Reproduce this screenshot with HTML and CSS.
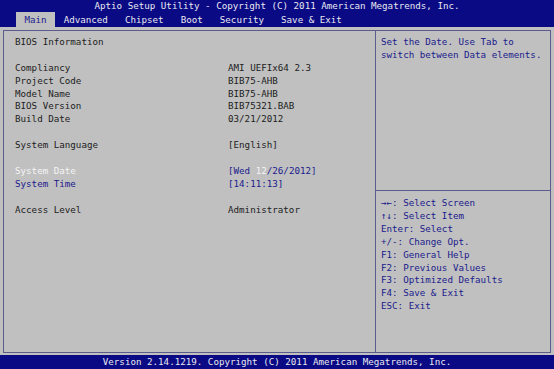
FILE: index.html
```html
<!DOCTYPE html>
<html lang="en">
<head>
    <meta charset="UTF-8">
    <title>Aptio Setup Utility</title>
    <link rel="stylesheet" href="styles.css">
</head>
<body>
    <div class="screen">
        <header class="top">
            <div class="title">Aptio Setup Utility - Copyright (C) 2011 American Megatrends, Inc.</div>
            <nav class="tabs">
                <span class="tab active">Main</span>
                <span class="tab">Advanced</span>
                <span class="tab">Chipset</span>
                <span class="tab">Boot</span>
                <span class="tab">Security</span>
                <span class="tab">Save &amp; Exit</span>
            </nav>
        </header>

        <div class="panel">
            <div class="settings">
                <div class="row"><span>BIOS Information</span></div>
                <div class="row"></div>
                <div class="row"><span>Compliancy</span><span>AMI UEFIx64 2.3</span></div>
                <div class="row"><span>Project Code</span><span>BIB75-AHB</span></div>
                <div class="row"><span>Model Name</span><span>BIB75-AHB</span></div>
                <div class="row"><span>BIOS Version</span><span>BIB75321.BAB</span></div>
                <div class="row"><span>Build Date</span><span>03/21/2012</span></div>
                <div class="row"></div>
                <div class="row"><span>System Language</span><span>[English]</span></div>
                <div class="row"></div>
                <div class="row option selected"><span class="label">System Date</span><span>[Wed <em>12</em>/26/2012]</span></div>
                <div class="row option"><span class="label">System Time</span><span>[14:11:13]</span></div>
                <div class="row"></div>
                <div class="row"><span>Access Level</span><span>Administrator</span></div>
            </div>

            <aside class="side">
                <div class="help">Set the Date. Use Tab to<br>switch between Data elements.</div>
                <div class="keys">
                    <div>&rarr;&larr;: Select Screen</div>
                    <div>&uarr;&darr;: Select Item</div>
                    <div>Enter: Select</div>
                    <div>+/-: Change Opt.</div>
                    <div>F1: General Help</div>
                    <div>F2: Previous Values</div>
                    <div>F3: Optimized Defaults</div>
                    <div>F4: Save &amp; Exit</div>
                    <div>ESC: Exit</div>
                </div>
            </aside>
        </div>

        <footer class="bottom">Version 2.14.1219. Copyright (C) 2011 American Megatrends, Inc.</footer>
    </div>
</body>
</html>
```

FILE: styles.css
```css
body {
    margin: 0;
    padding: 0;
    background-color: #c0c0c0;
    font-family: 'DejaVu Sans Mono', 'Liberation Mono', monospace;
    font-size: 9.2px;
    color: #1c1c1c;
}

.screen {
    width: 554px;
    height: 369px;
    display: flex;
    flex-direction: column;
    background-color: #c0c0c0;
}

.top {
    height: 27px;
    background-color: #0a0a84;
    color: #e8e8f0;
}

.title {
    height: 12px;
    line-height: 12px;
    text-align: center;
}

.tabs {
    display: flex;
    height: 15px;
    padding-left: 16px;
}

.tab {
    padding: 0 8.5px;
    line-height: 15px;
}

.tab.active {
    background-color: #c0c0c0;
    color: #1a1a8c;
}

.panel {
    display: flex;
    height: 323px;
    margin: 3px 3px 2px;
    border: 1px solid #5c5c8c;
    box-sizing: border-box;
}

.settings {
    width: 372px;
    padding: 5px 0 0 11px;
    box-sizing: border-box;
    border-right: 1px solid #5c5c8c;
}

.row {
    display: grid;
    grid-template-columns: 213px 1fr;
    height: 12.9px;
    line-height: 12.9px;
    white-space: pre;
}

.option {
    color: #1a1a8c;
}

.selected .label,
.selected em {
    color: #f4f4f4;
    font-style: normal;
}

.side {
    flex: 1;
    display: flex;
    flex-direction: column;
}

.help {
    height: 154px;
    padding: 5px 0 0 5px;
    line-height: 12.9px;
    color: #1a1a8c;
    border-bottom: 1px solid #5c5c8c;
}

.keys {
    padding: 6px 0 0 5px;
    line-height: 12.9px;
    color: #1a1a8c;
}

.bottom {
    height: 14px;
    line-height: 14px;
    background-color: #0a0a84;
    color: #e8e8f0;
    text-align: center;
}
```
